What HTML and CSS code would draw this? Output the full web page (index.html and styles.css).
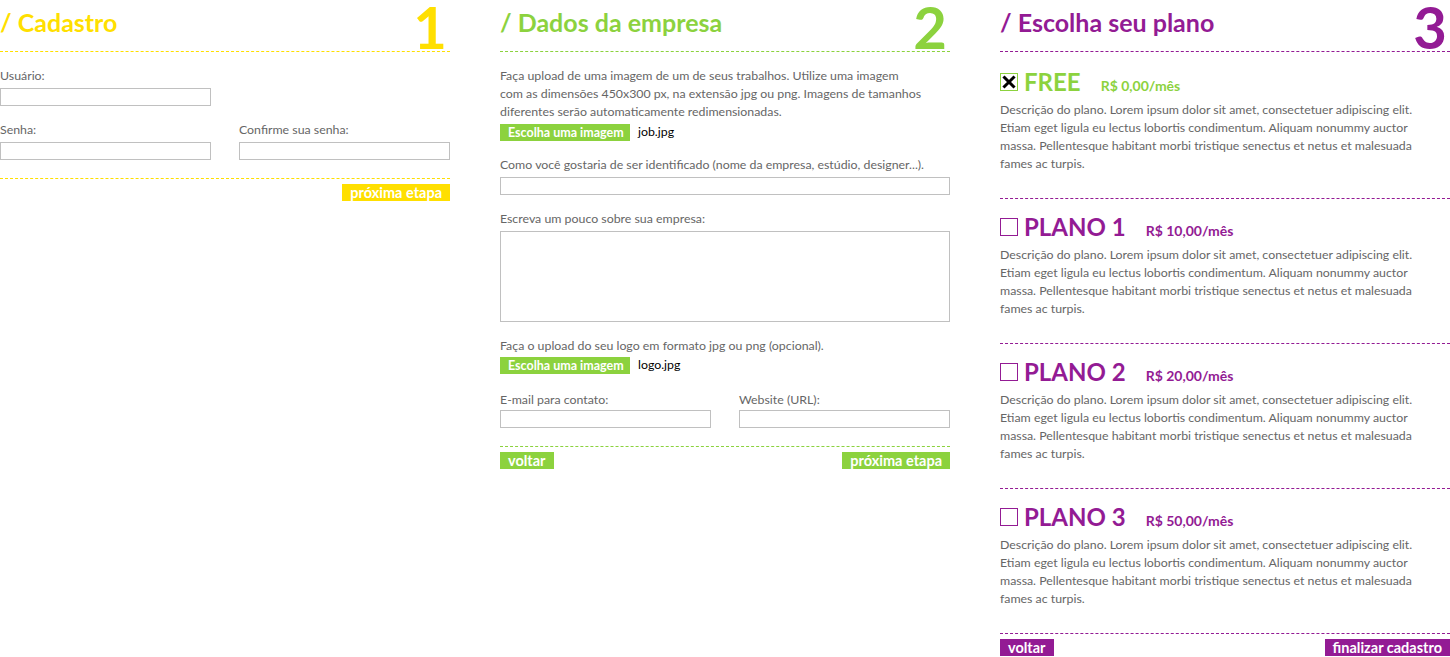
FILE: index.html
```html
<!DOCTYPE html>
<html lang="pt-BR">
<head>
<meta charset="utf-8">
<title>Cadastro</title>
<link rel="stylesheet" href="styles.css">
</head>
<body>
<div class="page">
  <section class="step step-yellow">
    <header class="step-head">
      <h1 class="step-title">/ Cadastro</h1>
      <span class="step-num">1</span>
    </header>
    <div class="field">
      <label class="label">Usuário:</label>
      <input class="text-input half" type="text">
    </div>
    <div class="field-row">
      <div class="field">
        <label class="label">Senha:</label>
        <input class="text-input" type="password">
      </div>
      <div class="field">
        <label class="label">Confirme sua senha:</label>
        <input class="text-input" type="password">
      </div>
    </div>
    <div class="actions">
      <span></span>
      <button class="btn">próxima etapa</button>
    </div>
  </section>

  <section class="step step-green">
    <header class="step-head">
      <h1 class="step-title">/ Dados da empresa</h1>
      <span class="step-num">2</span>
    </header>
    <p class="intro">Faça upload de uma imagem de um de seus trabalhos. Utilize uma imagem com as dimensões 450x300 px, na extensão jpg ou png. Imagens de tamanhos diferentes serão automaticamente redimensionadas.</p>
    <div class="file-row">
      <button class="btn btn-file">Escolha uma imagem</button>
      <span class="file-name">job.jpg</span>
    </div>
    <div class="field">
      <label class="label">Como você gostaria de ser identificado (nome da empresa, estúdio, designer...).</label>
      <input class="text-input" type="text">
    </div>
    <div class="field">
      <label class="label">Escreva um pouco sobre sua empresa:</label>
      <textarea class="text-area"></textarea>
    </div>
    <div class="field">
      <label class="label">Faça o upload do seu logo em formato jpg ou png (opcional).</label>
      <div class="file-row tight">
        <button class="btn btn-file">Escolha uma imagem</button>
        <span class="file-name">logo.jpg</span>
      </div>
    </div>
    <div class="field-row compact">
      <div class="field">
        <label class="label">E-mail para contato:</label>
        <input class="text-input" type="text">
      </div>
      <div class="field">
        <label class="label">Website (URL):</label>
        <input class="text-input" type="text">
      </div>
    </div>
    <div class="actions">
      <button class="btn">voltar</button>
      <button class="btn">próxima etapa</button>
    </div>
  </section>

  <section class="step step-purple">
    <header class="step-head">
      <h1 class="step-title">/ Escolha seu plano</h1>
      <span class="step-num">3</span>
    </header>
    <div class="plan plan-first plan-free">
      <div class="plan-head">
        <span class="check checked"><svg viewBox="0 0 16 16" width="16" height="16"><path d="M3.5 3.5 L12.5 12.5 M12.5 3.5 L3.5 12.5" stroke="#000" stroke-width="3" stroke-linecap="square"/></svg></span>
        <h2 class="plan-name">FREE<span class="plan-price">R$ 0,00/mês</span></h2>
      </div>
      <p class="plan-desc">Descrição do plano. Lorem ipsum dolor sit amet, consectetuer adipiscing elit. Etiam eget ligula eu lectus lobortis condimentum. Aliquam nonummy auctor massa. Pellentesque habitant morbi tristique senectus et netus et malesuada fames ac turpis.</p>
    </div>
    <div class="plan">
      <div class="plan-head">
        <span class="check"></span>
        <h2 class="plan-name">PLANO 1<span class="plan-price">R$ 10,00/mês</span></h2>
      </div>
      <p class="plan-desc">Descrição do plano. Lorem ipsum dolor sit amet, consectetuer adipiscing elit. Etiam eget ligula eu lectus lobortis condimentum. Aliquam nonummy auctor massa. Pellentesque habitant morbi tristique senectus et netus et malesuada fames ac turpis.</p>
    </div>
    <div class="plan">
      <div class="plan-head">
        <span class="check"></span>
        <h2 class="plan-name">PLANO 2<span class="plan-price">R$ 20,00/mês</span></h2>
      </div>
      <p class="plan-desc">Descrição do plano. Lorem ipsum dolor sit amet, consectetuer adipiscing elit. Etiam eget ligula eu lectus lobortis condimentum. Aliquam nonummy auctor massa. Pellentesque habitant morbi tristique senectus et netus et malesuada fames ac turpis.</p>
    </div>
    <div class="plan">
      <div class="plan-head">
        <span class="check"></span>
        <h2 class="plan-name">PLANO 3<span class="plan-price">R$ 50,00/mês</span></h2>
      </div>
      <p class="plan-desc">Descrição do plano. Lorem ipsum dolor sit amet, consectetuer adipiscing elit. Etiam eget ligula eu lectus lobortis condimentum. Aliquam nonummy auctor massa. Pellentesque habitant morbi tristique senectus et netus et malesuada fames ac turpis.</p>
    </div>
    <div class="actions flush">
      <button class="btn">voltar</button>
      <button class="btn">finalizar cadastro</button>
    </div>
  </section>
</div>
</body>
</html>
```

FILE: styles.css
```css
* { box-sizing: border-box; }

html, body {
  margin: 0;
  padding: 0;
  background: #ffffff;
}

body {
  font-family: "Lato", "DejaVu Sans", sans-serif;
  font-size: 12.35px;
  line-height: 18px;
  color: #666666;
}

.page {
  display: flex;
  gap: 50px;
  width: 1450px;
}

.step {
  width: 450px;
  flex: 0 0 450px;
  --accent: #ffdf00;
}

.step-yellow { --accent: #ffdf00; }
.step-green { --accent: #8cd23e; }
.step-purple { --accent: #931b94; }

.step-head {
  height: 52px;
  border-bottom: 1px dashed var(--accent);
  display: flex;
  justify-content: space-between;
  align-items: flex-end;
}

.step-title {
  align-self: flex-start;
  margin: 7px 0 0 0;
  font-size: 25px;
  line-height: 30px;
  font-weight: 700;
  color: var(--accent);
}

.step-num {
  font-size: 58px;
  line-height: 52px;
  font-weight: 700;
  color: var(--accent);
  margin-right: 3px;
  margin-bottom: -2px;
}

.field {
  margin-top: 15px;
}

.label {
  display: block;
  line-height: 18px;
  margin-bottom: 3px;
  color: #666666;
  white-space: nowrap;
}

.text-input {
  display: block;
  width: 100%;
  height: 18px;
  margin: 0;
  padding: 0 3px;
  border: 1px solid #c0c0c0;
  background: #ffffff;
  font: inherit;
}

.text-input.half {
  width: 211px;
}

.text-area {
  display: block;
  width: 100%;
  height: 91px;
  margin: 0;
  padding: 3px;
  border: 1px solid #c0c0c0;
  resize: none;
  font: inherit;
}

.field-row {
  display: flex;
  justify-content: space-between;
}

.field-row .field {
  width: 211px;
}

.field-row.compact .field {
  margin-top: 17px;
}

.field-row.compact .label {
  margin-bottom: 1px;
}

.actions {
  margin-top: 18px;
  border-top: 1px dashed var(--accent);
  padding-top: 5px;
  display: flex;
  justify-content: space-between;
}

.actions.flush {
  margin-top: 0;
  border-top: none;
}

.btn {
  display: block;
  margin: 0;
  height: 17px;
  padding: 0 8px;
  border: none;
  background: var(--accent);
  color: #ffffff;
  font-family: inherit;
  font-size: 14.5px;
  font-weight: 700;
  line-height: 17px;
  white-space: nowrap;
  cursor: pointer;
}

.btn-file {
  font-size: 12.5px;
  padding: 0 8px;
  width: 130px;
}

.intro {
  margin: 15px 0 0 0;
  width: 424px;
}

.file-row {
  margin-top: 2px;
  display: flex;
  align-items: center;
  gap: 8px;
}

.file-row.tight {
  margin-top: -2px;
}

.file-name {
  color: #000000;
}

.plan {
  padding: 19px 0 25px 0;
  border-bottom: 1px dashed var(--accent);
}

.plan-first {
  padding-top: 21px;
}

.plan-head {
  display: flex;
  align-items: center;
  height: 18px;
}

.check {
  width: 18px;
  height: 18px;
  flex: 0 0 18px;
  border: 1px solid var(--accent);
  background: #ffffff;
  display: flex;
  align-items: center;
  justify-content: center;
}

.plan-free .check {
  border-color: #8cd23e;
}

.plan-name {
  margin: 0 0 0 6px;
  padding-top: 3px;
  font-size: 24px;
  line-height: 18px;
  font-weight: 700;
  color: var(--accent);
  white-space: nowrap;
}

.plan-free .plan-name {
  color: #8cd23e;
}

.plan-price {
  margin-left: 20px;
  font-size: 14px;
  font-weight: 700;
}

.plan-desc {
  margin: 10px 0 0 0;
  width: 440px;
}
```
